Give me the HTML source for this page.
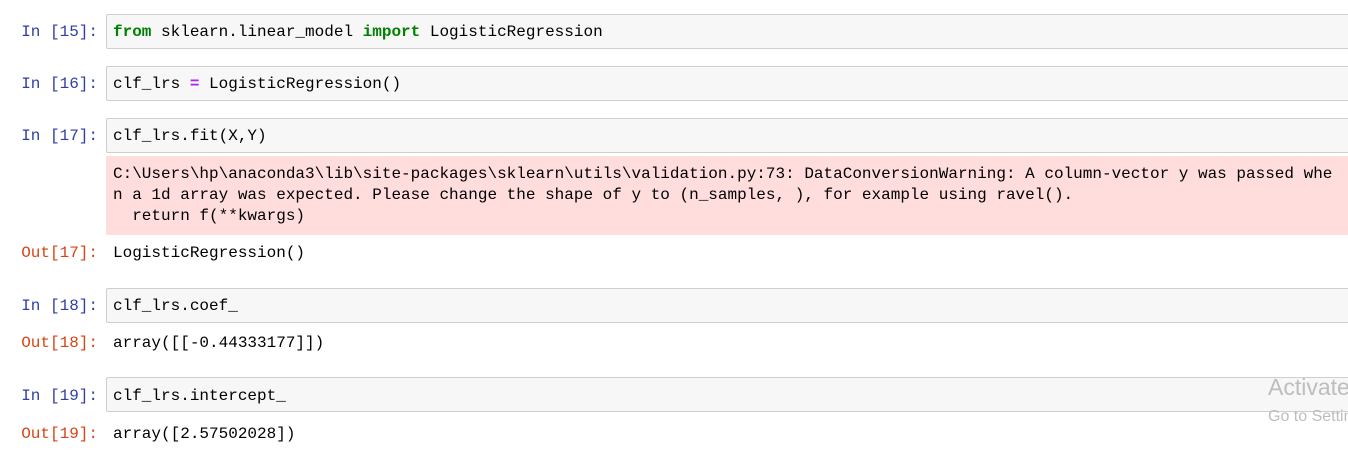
<!DOCTYPE html>
<html><head><style>
body{margin:0;background:#fff;width:1348px;height:450px;overflow:hidden;position:relative;font-family:"Liberation Mono",monospace;font-size:16px;}
.p{position:absolute;left:0;width:98px;text-align:right;white-space:pre;line-height:20px}
.in{color:#303f9f}.out{color:#d84315}
.box{position:absolute;left:106px;width:1260px;height:35px;background:#f7f7f7;border:1px solid #cfcfcf;border-radius:2px;box-sizing:border-box}
.t{position:absolute;left:113px;white-space:pre;color:#000;line-height:20px}
.err{position:absolute;left:106px;top:156px;width:1250px;height:79px;background:#fdd;}
.k{color:#008000;font-weight:bold}.o{color:#aa22ff;font-weight:bold}
.w{position:absolute;left:1268px;color:#bdbdbd;font-family:"Liberation Sans",sans-serif;white-space:nowrap}
</style></head><body>
<div class="box" style="top:14px"></div>
<div class="p in" style="top:22px">In [15]:</div>
<div class="t" style="top:22px"><span class="k">from</span> sklearn.linear_model <span class="k">import</span> LogisticRegression</div>

<div class="box" style="top:66px"></div>
<div class="p in" style="top:74px">In [16]:</div>
<div class="t" style="top:74px">clf_lrs <span class="o">=</span> LogisticRegression()</div>

<div class="box" style="top:118px"></div>
<div class="p in" style="top:126px">In [17]:</div>
<div class="t" style="top:126px">clf_lrs.fit(X,Y)</div>
<div class="err"></div>
<div class="t" style="top:164px;line-height:21px">C:\Users\hp\anaconda3\lib\site-packages\sklearn\utils\validation.py:73: DataConversionWarning: A column-vector y was passed whe
n a 1d array was expected. Please change the shape of y to (n_samples, ), for example using ravel().
  return f(**kwargs)</div>
<div class="p out" style="top:243px">Out[17]:</div>
<div class="t" style="top:243px">LogisticRegression()</div>

<div class="box" style="top:288px"></div>
<div class="p in" style="top:296px">In [18]:</div>
<div class="t" style="top:296px">clf_lrs.coef_</div>
<div class="p out" style="top:333px">Out[18]:</div>
<div class="t" style="top:333px">array([[-0.44333177]])</div>

<div class="box" style="top:377px"></div>
<div class="p in" style="top:386px">In [19]:</div>
<div class="t" style="top:386px">clf_lrs.intercept_</div>
<div class="p out" style="top:424px">Out[19]:</div>
<div class="t" style="top:424px">array([2.57502028])</div>

<div class="w" style="top:374px;font-size:23px">Activate</div>
<div class="w" style="top:408px;font-size:16px">Go to Settings</div>
</body></html>
